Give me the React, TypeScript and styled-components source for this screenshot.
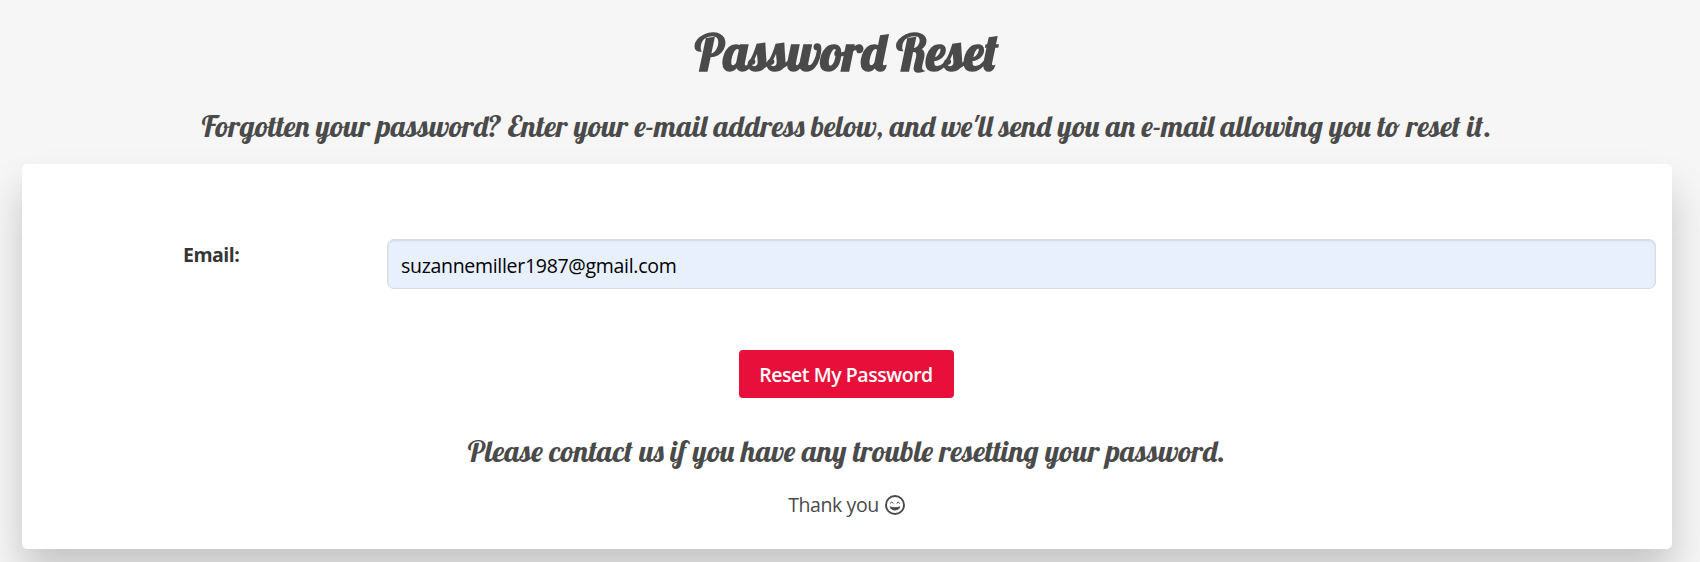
import React from "react";
import styled, { createGlobalStyle } from "styled-components";

const GlobalStyle = createGlobalStyle`
  *, *::before, *::after { box-sizing: border-box; }
  html { overflow: hidden; background: #f6f6f6; }
  body {
    margin: 0;
    color: #4a4a4a;
    font-family: "Segoe UI", "Open Sans", "Noto Sans", sans-serif;
    font-size: 20px;
    line-height: 30px;
  }
`;

const Page = styled.main`
  height: 562px;
  padding: 22px 28px 0 22px;
  overflow: hidden;
  text-align: center;
`;

const scriptFont = `"Lobster", "Liberation Serif", serif`;

const Title = styled.h1`
  margin: 0;
  padding-top: 1px;
  font: 700 50px/60px ${scriptFont};
`;

const Subtitle = styled.h2`
  margin: 0;
  font: 400 30px/36px ${scriptFont};
  white-space: nowrap;
`;

const Intro = styled.header`
  display: flex;
  flex-direction: column;
  gap: 25px;
  height: 142px;
  padding-right: 1px;
`;

const Card = styled.section`
  height: 385px;
  padding: 75px 16px 0;
  background: #fff;
  border-radius: 5px;
  box-shadow: 0 25px 40px rgba(0, 0, 0, 0.2);
`;

const Form = styled.form`
  display: flex;
  flex-direction: column;
  align-items: center;
`;

const Field = styled.div`
  display: flex;
  width: 100%;
  height: 50px;
`;

const Label = styled.label`
  flex: 0 0 349px;
  padding: 1px 0 0 145px;
  color: #363636;
  font-size: 19.5px;
  font-weight: 700;
  letter-spacing: -0.5px;
  text-align: left;
`;

const Input = styled.input`
  flex: 1;
  min-width: 0;
  height: 50px;
  padding: 2px 13px 0;
  color: #000;
  background: #e8f0fe;
  border: 1px solid #dbdbdb;
  border-radius: 7px;
  box-shadow: inset 0 1px 2px rgba(10, 10, 10, 0.1);
  font: 400 19.5px/30px "Segoe UI", "Open Sans", sans-serif;
  letter-spacing: -0.3px;
  outline: none;
`;

const Button = styled.button`
  width: 215px;
  height: 48px;
  margin: 61px 2px 0 0;
  padding: 1px 0 0;
  color: #fff;
  background: #e8103a;
  border: 0;
  border-radius: 4px;
  font: 600 19.5px/30px "Segoe UI", "Open Sans", sans-serif;
  letter-spacing: -0.45px;
`;

const Help = styled.div`
  display: flex;
  flex-direction: column;
  align-items: center;
  gap: 21px;
  margin-top: 35px;
  padding-right: 1px;
`;

const Thanks = styled.p`
  display: flex;
  align-items: center;
  gap: 6px;
  margin: 0;
  font-size: 19.5px;
  letter-spacing: -0.4px;
`;

const Smile = styled.svg`
  width: 20px;
  height: 20px;
  fill: none;
  stroke: currentColor;
  stroke-linecap: round;
`;

export default function App() {
  return (
    <>
      <GlobalStyle />
      <Page>
        <Intro>
          <Title>Password Reset</Title>
          <Subtitle>
            Forgotten your password? Enter your e-mail address below, and we'll send you an e-mail allowing you to reset it.
          </Subtitle>
        </Intro>
        <Card>
          <Form>
            <Field>
              <Label htmlFor="email">Email:</Label>
              <Input id="email" type="email" defaultValue="suzannemiller1987@gmail.com" />
            </Field>
            <Button type="button">Reset My Password</Button>
          </Form>
          <Help>
            <Subtitle>Please contact us if you have any trouble resetting your password.</Subtitle>
            <Thanks>
              <span>Thank you</span>
              <Smile viewBox="0 0 20 20" aria-hidden="true">
                <circle cx="10" cy="10" r="9" strokeWidth="1.9" />
                <path d="M5.4 8.1q1.4-2.4 2.800 0M11.800 8.100q1.4-2.4 2.800 0" strokeWidth="1" />
                <path d="M4.800 11.200q5.200 2 10.400 0c-.4 5.600-10 5.600-10.400 0z" fill="currentColor" stroke="none" />
              </Smile>
            </Thanks>
          </Help>
        </Card>
      </Page>
    </>
  );
}
